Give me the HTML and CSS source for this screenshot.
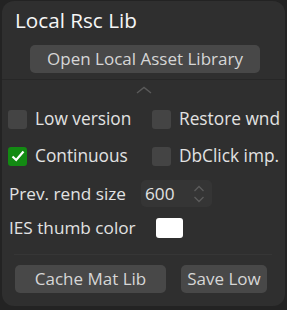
FILE: index.html
```html
<!DOCTYPE html>
<html lang="en">

<head>
  <meta charset="UTF-8" />
  <meta name="viewport" content="width=device-width, initial-scale=1.0" />
  <title>Local Rsc Lib</title>
  <link rel="stylesheet" href="styles.css">
</head>

<body>
  <div class="panel">
    <div class="head">
      <div class="title">Local Rsc Lib</div>
      <div class="open-row">
        <button class="btn open">Open Local Asset Library</button>
      </div>
    </div>
    <div class="fold">
      <svg width="16" height="8" viewBox="0 0 16 8"><path d="M1 7 L8 1.5 L15 7" fill="none" stroke="#5a5a5a" stroke-width="1.4" /></svg>
    </div>
    <div class="checks">
      <label class="check"><span class="box"></span>Low version</label>
      <label class="check"><span class="box"></span>Restore wnd</label>
      <label class="check"><span class="box on"><svg width="14" height="12" viewBox="0 0 14 12"><path d="M1.5 6.5 L5.2 10 L12.5 1.5" fill="none" stroke="#fff" stroke-width="2.2" /></svg></span>Continuous</label>
      <label class="check"><span class="box"></span>DbClick imp.</label>
    </div>
    <div class="field prev">
      <span>Prev. rend size</span>
      <div class="spin">
        <span class="val">600</span>
        <svg width="12" height="20" viewBox="0 0 12 20"><path d="M1.5 7 L6 2.5 L10.5 7 M1.5 13 L6 17.5 L10.5 13" fill="none" stroke="#5c5c5c" stroke-width="1.3" /></svg>
      </div>
    </div>
    <div class="field ies">
      <span>IES thumb color</span>
      <span class="swatch"></span>
    </div>
    <div class="sep"></div>
    <div class="actions">
      <button class="btn cache">Cache Mat Lib</button>
      <button class="btn save">Save Low</button>
    </div>
  </div>
</body>

</html>
```

FILE: styles.css
```css
html,
body {
  margin: 0;
  background-color: #232323;
}

body {
  padding: 1px 2px 4px 2px;
  font-family: "Open Sans", "Noto Sans", sans-serif;
  color: #e2e2e2;
}

.panel {
  height: 305px;
  box-sizing: border-box;
  background-color: #2f2f2f;
  border-radius: 12px;
  overflow: hidden;
}

.head {
  padding: 6px 0 6px 13px;
  border-bottom: 1px solid #272727;
}

.title {
  font-size: 20.7px;
  line-height: 26px;
  color: #f6f6f6;
}

.open-row {
  display: flex;
  padding: 12px 0 0 15px;
}

.btn {
  font-family: inherit;
  font-size: 17px;
  color: #d6d6d6;
  background-color: #484848;
  border: none;
  border-radius: 5px;
  padding: 0;
  height: 28px;
  line-height: 28px;
}

.open {
  width: 230px;
}

.fold {
  display: flex;
  justify-content: center;
  padding: 6px 0 0 0;
  height: 10px;
}

.checks {
  display: grid;
  grid-template-columns: 144px 1fr;
  row-gap: 17px;
  padding: 13px 0 0 6px;
}

.check {
  display: flex;
  align-items: center;
  gap: 8px;
  font-size: 17.3px;
  line-height: 20px;
  white-space: nowrap;
}

.box {
  width: 19px;
  height: 19px;
  flex: none;
  box-sizing: border-box;
  border-radius: 3px;
  background-color: #444;
  display: flex;
  align-items: center;
  justify-content: center;
}

.box.on {
  background-color: #138a13;
}

.field {
  display: flex;
  align-items: center;
  padding: 0 0 0 7px;
  font-size: 17.2px;
  white-space: nowrap;
}

.prev {
  gap: 15px;
  margin-top: 14px;
}

.ies {
  gap: 20px;
  margin-top: 9px;
}

.spin {
  width: 71px;
  height: 27px;
  box-sizing: border-box;
  background-color: #353535;
  border-radius: 5px;
  display: flex;
  align-items: center;
  justify-content: space-between;
  padding: 0 7px 0 4px;
}

.swatch {
  width: 27px;
  height: 20px;
  background-color: #fff;
  border-radius: 3px;
}

.sep {
  margin: 15px 13px 0 12px;
  border-top: 1px solid #363636;
}

.actions {
  display: flex;
  gap: 15px;
  padding: 10px 0 0 13px;
}

.cache {
  width: 151px;
}

.save {
  width: 86px;
}
```
